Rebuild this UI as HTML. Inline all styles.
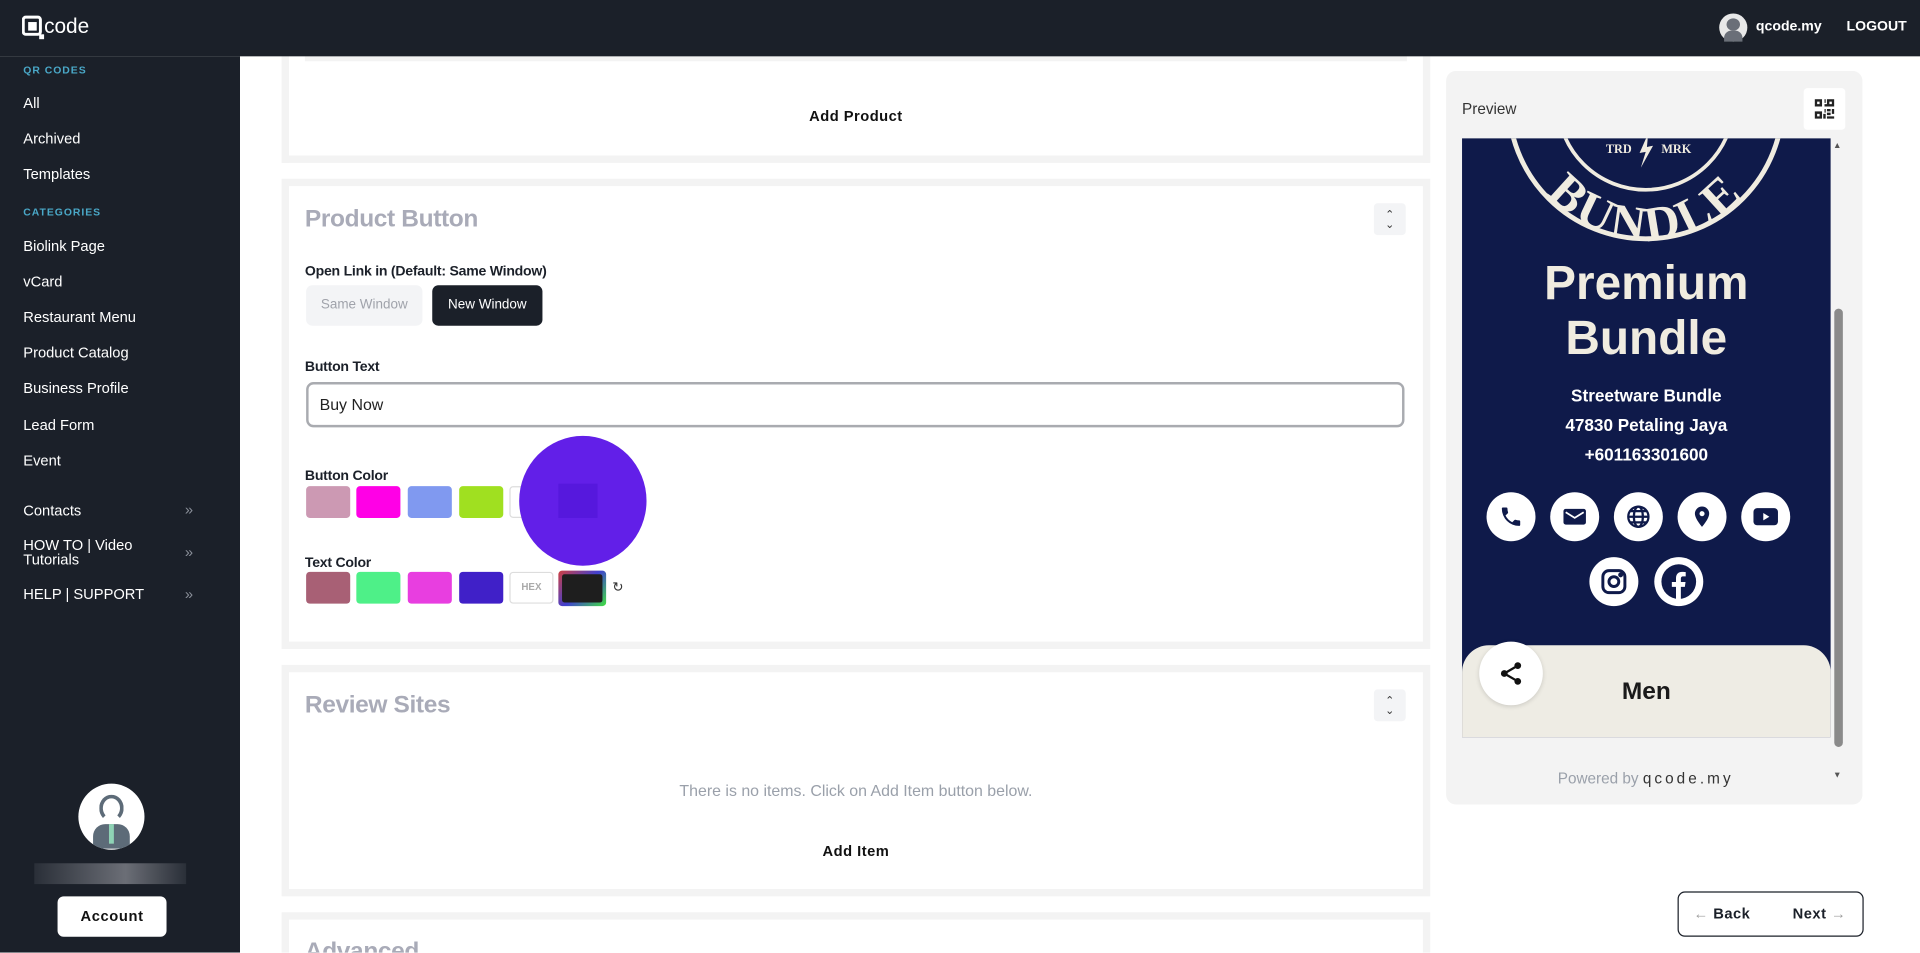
<!DOCTYPE html>
<html><head><meta charset="utf-8"><style>
*{box-sizing:border-box;margin:0;padding:0}
html,body{width:1920px;height:953px;overflow:hidden;background:#fff;font-family:"Liberation Sans",sans-serif}
#w{position:absolute;left:0;top:0;width:1568px;height:778px;transform:scale(1.22449);transform-origin:0 0;overflow:hidden}
.a{position:absolute}
.top{left:0;top:0;width:1568px;height:46px;background:#1b2029;z-index:5}
.side{left:0;top:46px;width:196px;height:732px;background:#1b2029}
.si{position:absolute;left:19px;color:#fff;font-size:12px;line-height:14px}
.sl{position:absolute;left:19px;color:#4aa8c8;font-size:8.5px;font-weight:bold;letter-spacing:.8px}
.chev{position:absolute;left:151px;color:#8a8f99;font-size:12px}
.card{position:absolute;left:230px;width:938px;border:6px solid #f3f3f3;background:#fff}
.ttl{position:absolute;left:13px;color:#a9abb8;font-size:20px;font-weight:bold;letter-spacing:-.3px}
.tog{position:absolute;left:886px;width:26px;height:26px;background:#f3f4f6;border-radius:3px;color:#333;font-size:9px;text-align:center;line-height:8px;padding-top:5px}
.lbl{position:absolute;color:#1b2029;font-size:11.5px;font-weight:bold;letter-spacing:-.2px}
.sw{position:absolute;width:36px;height:26px;border-radius:3px}
.ic{position:absolute;width:40px;height:40px;border-radius:50%;background:#fff;display:flex;align-items:center;justify-content:center}
</style></head><body><div id="w">
<div class="a top">
 <svg class="a" style="left:18px;top:12px" width="64" height="22" viewBox="0 0 64 22"><rect x="1" y="2" width="14" height="14" rx="2" fill="none" stroke="#fff" stroke-width="2.4"/><rect x="5" y="6" width="7" height="7" fill="#fff"/><rect x="14" y="16" width="4" height="4" fill="#fff"/><text x="18" y="15" fill="#fff" font-size="17" font-family="Liberation Sans">code</text></svg>
 <div class="a" style="left:1404px;top:11px;width:23px;height:23px;border-radius:50%;background:#e8e8e8"><div class="a" style="left:6px;top:4px;width:11px;height:10px;border-radius:50%;background:#6a6f78"></div><div class="a" style="left:4px;top:14px;width:15px;height:9px;border-radius:6px 6px 0 0;background:#6a6f78"></div></div>
 <div class="a" style="left:1434px;top:16px;color:#fff;font-size:11.5px;font-weight:bold">qcode.my</div>
 <div class="a" style="left:1508px;top:16px;color:#fff;font-size:11.5px;font-weight:bold">LOGOUT</div>
</div>
<div class="a side">
 <div class="sl" style="top:6px">QR CODES</div>
 <div class="si" style="top:31px">All</div>
 <div class="si" style="top:60px">Archived</div>
 <div class="si" style="top:89px">Templates</div>
 <div class="sl" style="top:122px">CATEGORIES</div>
 <div class="si" style="top:148px">Biolink Page</div>
 <div class="si" style="top:177px">vCard</div>
 <div class="si" style="top:206px">Restaurant Menu</div>
 <div class="si" style="top:235px">Product Catalog</div>
 <div class="si" style="top:264px">Business Profile</div>
 <div class="si" style="top:294px">Lead Form</div>
 <div class="si" style="top:323px">Event</div>
 <div class="si" style="top:364px">Contacts</div><div class="chev" style="top:363px">»</div>
 <div class="si" style="top:393px;line-height:12px">HOW TO | Video<br>Tutorials</div><div class="chev" style="top:398px">»</div>
 <div class="si" style="top:432px">HELP | SUPPORT</div><div class="chev" style="top:432px">»</div>
 <div class="a" style="left:64px;top:594px;width:54px;height:54px;border-radius:50%;background:#fff;overflow:hidden">
  <div class="a" style="left:17px;top:9px;width:20px;height:22px;border-radius:50%;background:#fff;border:3px solid #5d6b78;border-bottom-color:#fff"></div>
  <div class="a" style="left:12px;top:33px;width:30px;height:20px;border-radius:10px 10px 0 0;background:#5d6b78"></div>
  <div class="a" style="left:25px;top:33px;width:4px;height:16px;background:#8fd3b5"></div>
 </div>
 <div class="a" style="left:28px;top:659px;width:124px;height:17px;background:linear-gradient(90deg,#2a2f38,#6b6e76 60%,#2a2f38)"></div>
 <div class="a" style="left:47px;top:686px;width:89px;height:33px;background:#fff;border-radius:5px;text-align:center;line-height:33px;font-size:12px;font-weight:bold;color:#111;letter-spacing:.5px">Account</div>
</div>
<!-- cards -->
<div class="card" style="top:30px;height:103px;border-top:none">
 <div class="a" style="left:13px;top:14px;width:900px;height:6px;background:#f3f3f3"></div>
 <div class="a" style="left:0;width:926px;top:58px;text-align:center;font-size:12px;font-weight:bold;color:#111;letter-spacing:.4px">Add Product</div>
</div>
<div class="card" style="top:146px;height:384px">
 <div class="ttl" style="top:16px">Product Button</div>
 <div class="tog" style="top:14px">⌃<br>⌄</div>
 <div class="lbl" style="left:13px;top:64px">Open Link in (Default: Same Window)</div>
 <div class="a" style="left:14px;top:81px;width:95px;height:33px;background:#f3f4f6;border-radius:5px;color:#a0a3ab;font-size:11px;text-align:center;line-height:33px">Same Window</div>
 <div class="a" style="left:117px;top:81px;width:90px;height:33px;background:#1b2029;border-radius:5px;color:#fff;font-size:11px;text-align:center;line-height:33px">New Window</div>
 <div class="lbl" style="left:13px;top:142px">Button Text</div>
 <div class="a" style="left:14px;top:160px;width:897px;height:37px;border:2px solid #a9abb0;border-radius:6px;padding-left:9px;line-height:33px;font-size:13px;color:#222">Buy Now</div>
 <div class="lbl" style="left:13px;top:231px">Button Color</div>
 <div class="sw" style="left:14px;top:245px;background:#cc99b3"></div>
 <div class="sw" style="left:55px;top:245px;background:#ff00e6"></div>
 <div class="sw" style="left:97px;top:245px;background:#8099f0"></div>
 <div class="sw" style="left:139px;top:245px;background:#a0e020"></div>
 <div class="sw" style="left:180px;top:245px;border:1px solid #ddd"></div>
 <div class="a" style="left:188px;top:204px;width:104px;height:106px;border-radius:50%;background:#621fe8"><div class="a" style="left:32px;top:39px;width:32px;height:28px;background:#5618dd"></div></div>
 <div class="lbl" style="left:13px;top:302px">Text Color</div>
 <div class="sw" style="left:14px;top:315px;background:#a86075"></div>
 <div class="sw" style="left:55px;top:315px;background:#4ef088"></div>
 <div class="sw" style="left:97px;top:315px;background:#e83ee0"></div>
 <div class="sw" style="left:139px;top:315px;background:#4020c8"></div>
 <div class="sw" style="left:180px;top:315px;border:1px solid #ddd;color:#aaa;font-size:8px;font-weight:bold;text-align:center;line-height:24px">HEX</div>
 <div class="a" style="left:220px;top:314px;width:39px;height:29px;border-radius:3px;background:linear-gradient(135deg,#d04040,#4040d0 50%,#40e040);padding:3px"><div style="width:100%;height:100%;background:#1e1e1e;border-radius:2px"></div></div>
 <div class="a" style="left:264px;top:321px;font-size:11px;color:#333">↻</div>
</div>
<div class="card" style="top:543px;height:189px">
 <div class="ttl" style="top:16px">Review Sites</div>
 <div class="tog" style="top:14px">⌃<br>⌄</div>
 <div class="a" style="left:0;width:926px;top:89px;text-align:center;font-size:13px;color:#9aa0aa">There is no items. Click on Add Item button below.</div>
 <div class="a" style="left:0;width:926px;top:139px;text-align:center;font-size:12px;font-weight:bold;color:#111;letter-spacing:.4px">Add Item</div>
</div>
<div class="card" style="top:745px;height:60px">
 <div class="ttl" style="top:15px">Advanced</div>
</div>
<!-- preview -->
<div class="a" style="left:1181px;top:58px;width:340px;height:599px;background:#f3f3f3;border-radius:8px">
 <div class="a" style="left:13px;top:24px;font-size:12.5px;color:#333">Preview</div>
 <div class="a" style="left:292px;top:14px;width:34px;height:34px;background:#fff;border-radius:3px">
  <svg class="a" style="left:9px;top:9px" width="16" height="16" viewBox="0 0 16 16" fill="#222"><path d="M0 0h6v6H0zM2 2v2h2V2zM10 0h6v6h-6zM12 2v2h2V2zM0 10h6v6H0zM2 12v2h2v-2zM8 0h1v3H8zM8 4h2v2H8zM10 8h3v2h-3zM8 8h1v3H8zM14 8h2v4h-2zM10 11h3v2h-3zM10 14h6v2h-6zM7 12h2v4H7z"/></svg>
 </div>
 <div class="a" style="left:13px;top:55px;width:301px;height:489px;background:#0f1a4a;overflow:hidden">
  <svg class="a" style="left:0;top:0" width="301" height="90" viewBox="0 0 301 90">
   <defs><path id="arc" d="M45 -22 A105 105 0 0 0 255 -22"/></defs>
   <circle cx="150" cy="-30" r="112" fill="none" stroke="#f0ece0" stroke-width="4"/>
   <circle cx="150" cy="-30" r="72" fill="none" stroke="#f0ece0" stroke-width="3"/>
   <text font-family="Liberation Serif" font-weight="bold" font-size="40" fill="#f0ece0" letter-spacing="3"><textPath href="#arc" startOffset="50%" text-anchor="middle">BUNDLE</textPath></text>
   <text x="128" y="12" font-family="Liberation Serif" font-weight="bold" font-size="10" fill="#f0ece0" text-anchor="middle">TRD</text>
   <text x="175" y="12" font-family="Liberation Serif" font-weight="bold" font-size="10" fill="#f0ece0" text-anchor="middle">MRK</text>
   <path d="M152 -4 L145 12 L150 11 L146 24 L156 6 L151 7 Z" fill="#f0ece0"/>
  </svg>
  <div class="a" style="left:0;width:301px;top:96px;text-align:center;color:#f0ece0;font-size:39px;font-weight:bold;line-height:45px">Premium<br>Bundle</div>
  <div class="a" style="left:0;width:301px;top:198px;text-align:center;color:#fff;font-size:14px;font-weight:bold;line-height:24px">Streetware Bundle<br>47830 Petaling Jaya<br>+601163301600</div>
  <div class="ic" style="left:20px;top:289px"><svg width="20" height="20" viewBox="0 0 24 24"><path fill="#0f1a4a" d="M6.6 10.8a15 15 0 0 0 6.6 6.6l2.2-2.2c.3-.3.7-.4 1-.2 1.1.4 2.300.6 3.6.6.6 0 1 .4 1 1V20c0 .6-.4 1-1 1A17 17 0 0 1 3 4c0-.6.4-1 1-1h3.5c.6 0 1 .4 1 1 0 1.3.2 2.5.6 3.6.1.3 0 .7-.2 1z"/></svg></div>
  <div class="ic" style="left:72px;top:289px"><svg width="22" height="22" viewBox="0 0 24 24"><rect x="2" y="5" width="20" height="14" rx="2" fill="#0f1a4a"/><path d="M4 8l8 5 8-5" stroke="#fff" stroke-width="1.6" fill="none"/></svg></div>
  <div class="ic" style="left:124px;top:289px"><svg width="22" height="22" viewBox="0 0 24 24" fill="none" stroke="#0f1a4a" stroke-width="2"><circle cx="12" cy="12" r="9"/><ellipse cx="12" cy="12" rx="4" ry="9"/><path d="M3 12h18M5 7h14M5 17h14"/></svg></div>
  <div class="ic" style="left:176px;top:289px"><svg width="20" height="20" viewBox="0 0 24 24"><path fill="#0f1a4a" d="M12 2a7 7 0 0 0-7 7c0 5 7 13 7 13s7-8 7-13a7 7 0 0 0-7-7zm0 9.5a2.5 2.5 0 1 1 0-5 2.5 2.5 0 0 1 0 5z"/></svg></div>
  <div class="ic" style="left:228px;top:289px"><svg width="24" height="24" viewBox="0 0 24 24"><rect x="2" y="5" width="20" height="14" rx="3" fill="#0f1a4a"/><path d="M10 9l5 3-5 3z" fill="#fff"/></svg></div>
  <div class="ic" style="left:104px;top:342px"><svg width="24" height="24" viewBox="0 0 24 24" fill="none" stroke="#0f1a4a" stroke-width="2.4"><rect x="3" y="3" width="18" height="18" rx="5"/><circle cx="12" cy="12" r="4"/><circle cx="17.5" cy="6.5" r=".8" fill="#0f1a4a"/></svg></div>
  <div class="ic" style="left:157px;top:342px"><svg width="34" height="34" viewBox="0 0 24 24"><circle cx="12" cy="12" r="10" fill="#0f1a4a"/><path fill="#fff" d="M13.2 22v-7h2.3l.4-2.8h-2.7v-1.8c0-.8.3-1.4 1.4-1.4H16V6.5c-.3 0-1.1-.1-2.1-.1-2.1 0-3.5 1.3-3.5 3.6v2.2H8V15h2.4v7z"/></svg></div>
  <div class="a" style="left:0;top:414px;width:301px;height:80px;background:#eeece4;border-radius:22px 22px 0 0"></div>
  <div class="a" style="left:14px;top:411px;width:52px;height:52px;border-radius:50%;background:#fff;box-shadow:0 1px 4px rgba(0,0,0,.15);display:flex;align-items:center;justify-content:center"><svg width="22" height="22" viewBox="0 0 24 24" fill="#111"><circle cx="18" cy="5" r="3"/><circle cx="6" cy="12" r="3"/><circle cx="18" cy="19" r="3"/><path d="M6 12L18 5M6 12l12 7" stroke="#111" stroke-width="2"/></svg></div>
  <div class="a" style="left:0;width:301px;top:441px;text-align:center;color:#1a1a1a;font-size:20px;font-weight:bold">Men</div>
 </div>
 <div class="a" style="left:316px;top:58px;font-size:7px;color:#555">▲</div>
 <div class="a" style="left:317px;top:194px;width:7px;height:358px;background:#8a8a8a;border-radius:4px"></div>
 <div class="a" style="left:316px;top:572px;font-size:7px;color:#555">▼</div>
 <div class="a" style="left:0;width:326px;top:571px;text-align:center;font-size:12.5px;color:#9aa0aa">Powered by <span style="color:#333;letter-spacing:2.5px">qcode.my</span></div>
</div>
<div class="a" style="left:1370px;top:728px;width:152px;height:37px;border:1.5px solid #1b2029;border-radius:6px;font-size:12px;font-weight:bold;color:#1b2029;letter-spacing:.4px">
 <span class="a" style="left:12px;top:10px"><span style="color:#999">←</span> Back</span>
 <span class="a" style="left:93px;top:10px">Next <span style="color:#999">→</span></span>
</div>
</div></body></html>
